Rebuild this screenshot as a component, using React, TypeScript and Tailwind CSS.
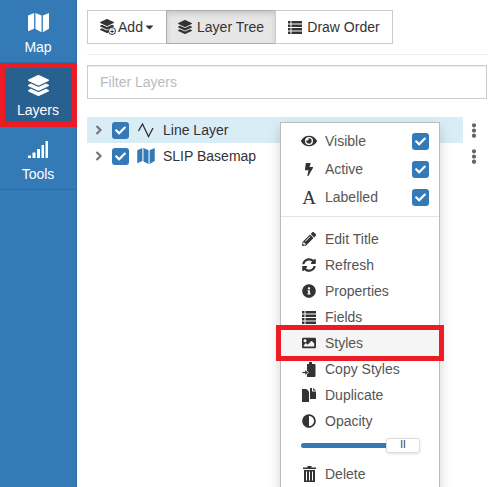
import type { ReactNode } from "react";
import {
	FaAdjust,
	FaBolt,
	FaCaretDown,
	FaCheck,
	FaEllipsisV,
	FaEye,
	FaImage,
	FaInfoCircle,
	FaLayerGroup,
	FaPencilAlt,
	FaSyncAlt,
} from "react-icons/fa";

function MapIcon({ className }: { className?: string }) {
	return (
		<svg viewBox="0 0 24 22" className={className} fill="currentColor">
			<path d="M0 3 L7 0 V18 L0 21 Z" />
			<path d="M8.5 0 L15.5 3 V22 L8.5 18.5 Z" />
			<path d="M17 3 L24 0 V18 L17 22 Z" />
		</svg>
	);
}

function LineIcon() {
	return (
		<svg viewBox="0 0 16 15" className="h-[15px] w-[16px]" fill="none" stroke="#333" strokeWidth="1.3">
			<path d="M0.5 8 L4.5 1 L10.5 13.5 L15 5" />
		</svg>
	);
}

function ListIcon({ className }: { className?: string }) {
	return (
		<svg viewBox="0 0 14 13" className={className} fill="currentColor">
			<path d="M0 0h2.5v2.5H0z M3.5 0H14v2.5H3.5z M0 3.5h2.5V6H0z M3.5 3.5H14V6H3.5z M0 7h2.5v2.5H0z M3.5 7H14v2.5H3.5z M0 10.5h2.5V13H0z M3.5 10.5H14V13H3.5z" />
		</svg>
	);
}

function SignalIcon() {
	return (
		<svg viewBox="0 0 20 17" className="h-[17px] w-[20px]" fill="currentColor">
			<path d="M0 14.5h3V17H0z M4.5 11.5h3V17h-3z M9 8h3v9H9z M13.500 4h2.500v13h-2.500z M17.500 0H20v17h-2.500z" />
		</svg>
	);
}

function AddIcon() {
	return (
		<span className="relative inline-flex h-[16px] w-[16px]">
			<FaLayerGroup className="h-[14px] w-[14px]" />
			<span className="absolute bottom-0 right-0 flex h-[8px] w-[8px] items-center justify-center rounded-full border-[1.5px] border-[#333] bg-white text-[7px] leading-none font-bold">
				+
			</span>
		</span>
	);
}

function CopyStylesIcon() {
	return (
		<svg viewBox="0 0 14 15" className="h-[15px] w-[14px]" fill="currentColor">
			<path d="M5 2h2V0h3v2h2.500a1 1 0 0 1 1 1v11a1 1 0 0 1-1 1H5z" />
			<path d="M0 9.500h3V7.500L6.500 10.500 3 13.500v-2H0z" fill="#333" stroke="#fff" strokeWidth="0.8" />
		</svg>
	);
}

function DuplicateIcon() {
	return (
		<svg viewBox="0 0 14 14" className="h-[14px] w-[14px]" fill="currentColor">
			<path d="M0 1h4.500L7 3.500V14H0z" />
			<path d="M8 0h2v3.500h4V11H8z" />
			<path d="M11 0l3 2.500h-3z" />
		</svg>
	);
}

function TrashIcon() {
	return (
		<svg viewBox="0 0 13 16" className="h-[16px] w-[13px]" fill="currentColor">
			<path d="M4.500 0h4v1.500H13V3H0V1.500h4.500z" />
			<path d="M1 4h11v12H1z M3 5.500v9h1v-9z M6 5.500v9h1v-9z M9 5.500v9h1v-9z" fillRule="evenodd" />
		</svg>
	);
}

function Check() {
	return (
		<span className="flex h-[17px] w-[17px] items-center justify-center rounded-[3px] bg-[#337ab7] text-white">
			<FaCheck className="h-[11px] w-[11px]" />
		</span>
	);
}

function SideItem({
	label,
	icon,
	active,
}: {
	label: string;
	icon: ReactNode;
	active?: boolean;
}) {
	return (
		<div
			className={`flex flex-col items-center border-b border-[#2e6da4] pt-[12px] text-white ${active ? "h-[64px] bg-[#286090]" : "h-[63px]"}`}
		>
			<div className="flex h-[21px] items-center">{icon}</div>
			<span className="mt-[4px] text-[14px] leading-[20px]">{label}</span>
		</div>
	);
}

function TreeRow({ icon, label, active }: { icon: ReactNode; label: string; active?: boolean }) {
	return (
		<div className="flex h-[26px] items-center">
			<div className={`flex h-[26px] w-[376px] items-center ${active ? "bg-[#d9edf7]" : ""}`}>
				<svg viewBox="0 0 8 10" className="ml-[8px] h-[10px] w-[8px]" fill="none" stroke="#777" strokeWidth="2.2">
					<path d="M1.500 1 L5.500 5 L1.500 9" />
				</svg>
				<span className="ml-[9px]">
					<Check />
				</span>
				<span className="ml-[8px] flex w-[18px] justify-center">{icon}</span>
				<span className="ml-[8px] text-[14px] text-[#333]">{label}</span>
			</div>
			<FaEllipsisV className="ml-[7px] h-[15px] w-[8px] text-[#666]" />
		</div>
	);
}

function MenuRow({ icon, label, check, tall }: { icon: ReactNode; label: string; check?: boolean; tall?: boolean }) {
	return (
		<div className={`flex items-center pl-[20px] pr-[10px] ${tall ? "h-[28px]" : "h-[26px]"}`}>
			<span className="flex w-[16px] justify-center text-[#333]">{icon}</span>
			<span className="ml-[8px] flex-1 text-[14px] text-[#555]">{label}</span>
			{check && <Check />}
		</div>
	);
}

const ic = "h-[14px] w-[14px]";

export default function App() {
	return (
		<div className="relative flex h-[487px] w-[497px] overflow-hidden bg-white font-['Liberation_Sans',Arial,sans-serif] text-[14px]">
			<div className="relative w-[77px] shrink-0 border-r border-[#2e6da4] bg-[#337ab7]">
				<SideItem label="Map" icon={<MapIcon className="h-[21px] w-[21px]" />} />
				<SideItem label="Layers" active icon={<FaLayerGroup className="h-[21px] w-[21px]" />} />
				<SideItem label="Tools" icon={<SignalIcon />} />
				<div className="absolute left-0 top-[63px] h-[64px] w-[77px] border-[5px] border-[#ed1c24]" />
			</div>

			<div className="flex-1 pl-[10px] pr-[10px] pt-[10px]">
				<div className="flex h-[34px]">
					<div className="flex w-[80px] items-center justify-center gap-[2px] border border-[#ccc] text-[#333]">
						<AddIcon />
						<span>Add</span>
						<FaCaretDown className="h-[12px] w-[9px]" />
					</div>
					<div className="-ml-px flex w-[110px] items-center justify-center gap-[5px] border border-[#adadad] bg-[#e6e6e6] text-[#333] shadow-[inset_0_3px_5px_rgba(0,0,0,0.125)]">
						<FaLayerGroup className="h-[14px] w-[14px]" />
						<span>Layer Tree</span>
					</div>
					<div className="-ml-px flex w-[118px] items-center justify-center gap-[5px] border border-[#ccc] text-[#333]">
						<ListIcon className="h-[13px] w-[14px]" />
						<span>Draw Order</span>
					</div>
				</div>
				<div className="mt-[10px] h-px bg-[#eee]" />
				<div className="mt-[10px] flex h-[34px] items-center border border-[#ccc] px-[12px] text-[14px] text-[#bbb] shadow-[inset_0_1px_1px_rgba(0,0,0,0.075)]">
					Filter Layers
				</div>
				<div className="mt-[18px]">
					<TreeRow active icon={<LineIcon />} label="Line Layer" />
					<TreeRow icon={<MapIcon className="h-[16px] w-[18px] text-[#337ab7]" />} label="SLIP Basemap" />
				</div>
			</div>

			<div className="absolute left-[280px] top-[122px] h-[380px] w-[160px] border border-[#bbb] bg-white pt-[4px] shadow-[0_6px_12px_rgba(0,0,0,0.175)]">
				<MenuRow tall icon={<FaEye className="h-[16px] w-[16px]" />} label="Visible" check />
				<MenuRow tall icon={<FaBolt className="h-[13px] w-[10px]" />} label="Active" check />
				<MenuRow
					tall
					icon={<span className="font-['Liberation_Serif',serif] text-[19px] leading-none">A</span>}
					label="Labelled"
					check
				/>
				<div className="mb-[9px] mt-[5px] h-px bg-[#e5e5e5]" />
				<MenuRow icon={<FaPencilAlt className={ic} />} label="Edit Title" />
				<MenuRow icon={<FaSyncAlt className={ic} />} label="Refresh" />
				<MenuRow icon={<FaInfoCircle className={ic} />} label="Properties" />
				<MenuRow icon={<ListIcon className="h-[13px] w-[14px]" />} label="Fields" />
				<div className="bg-[#f5f5f5]">
					<MenuRow icon={<FaImage className={ic} />} label="Styles" />
				</div>
				<MenuRow icon={<CopyStylesIcon />} label="Copy Styles" />
				<MenuRow icon={<DuplicateIcon />} label="Duplicate" />
				<MenuRow icon={<FaAdjust className={ic} />} label="Opacity" />
				<div className="ml-[20px] mt-[2px] flex h-[18px] w-[119px] items-center">
					<div className="h-[5px] w-[85px] rounded-l-full bg-[#337ab7]" />
					<div className="flex h-[15px] w-[34px] items-center justify-center rounded-[3px] border border-[#ddd] bg-white text-[10px] leading-none text-[#333] shadow-sm">
						II
					</div>
				</div>
				<div className="mt-[7px]">
					<MenuRow icon={<TrashIcon />} label="Delete" />
				</div>
			</div>

			<div className="absolute left-[276px] top-[325px] h-[36px] w-[168px] border-[5px] border-[#ed1c24]" />
		</div>
	);
}
